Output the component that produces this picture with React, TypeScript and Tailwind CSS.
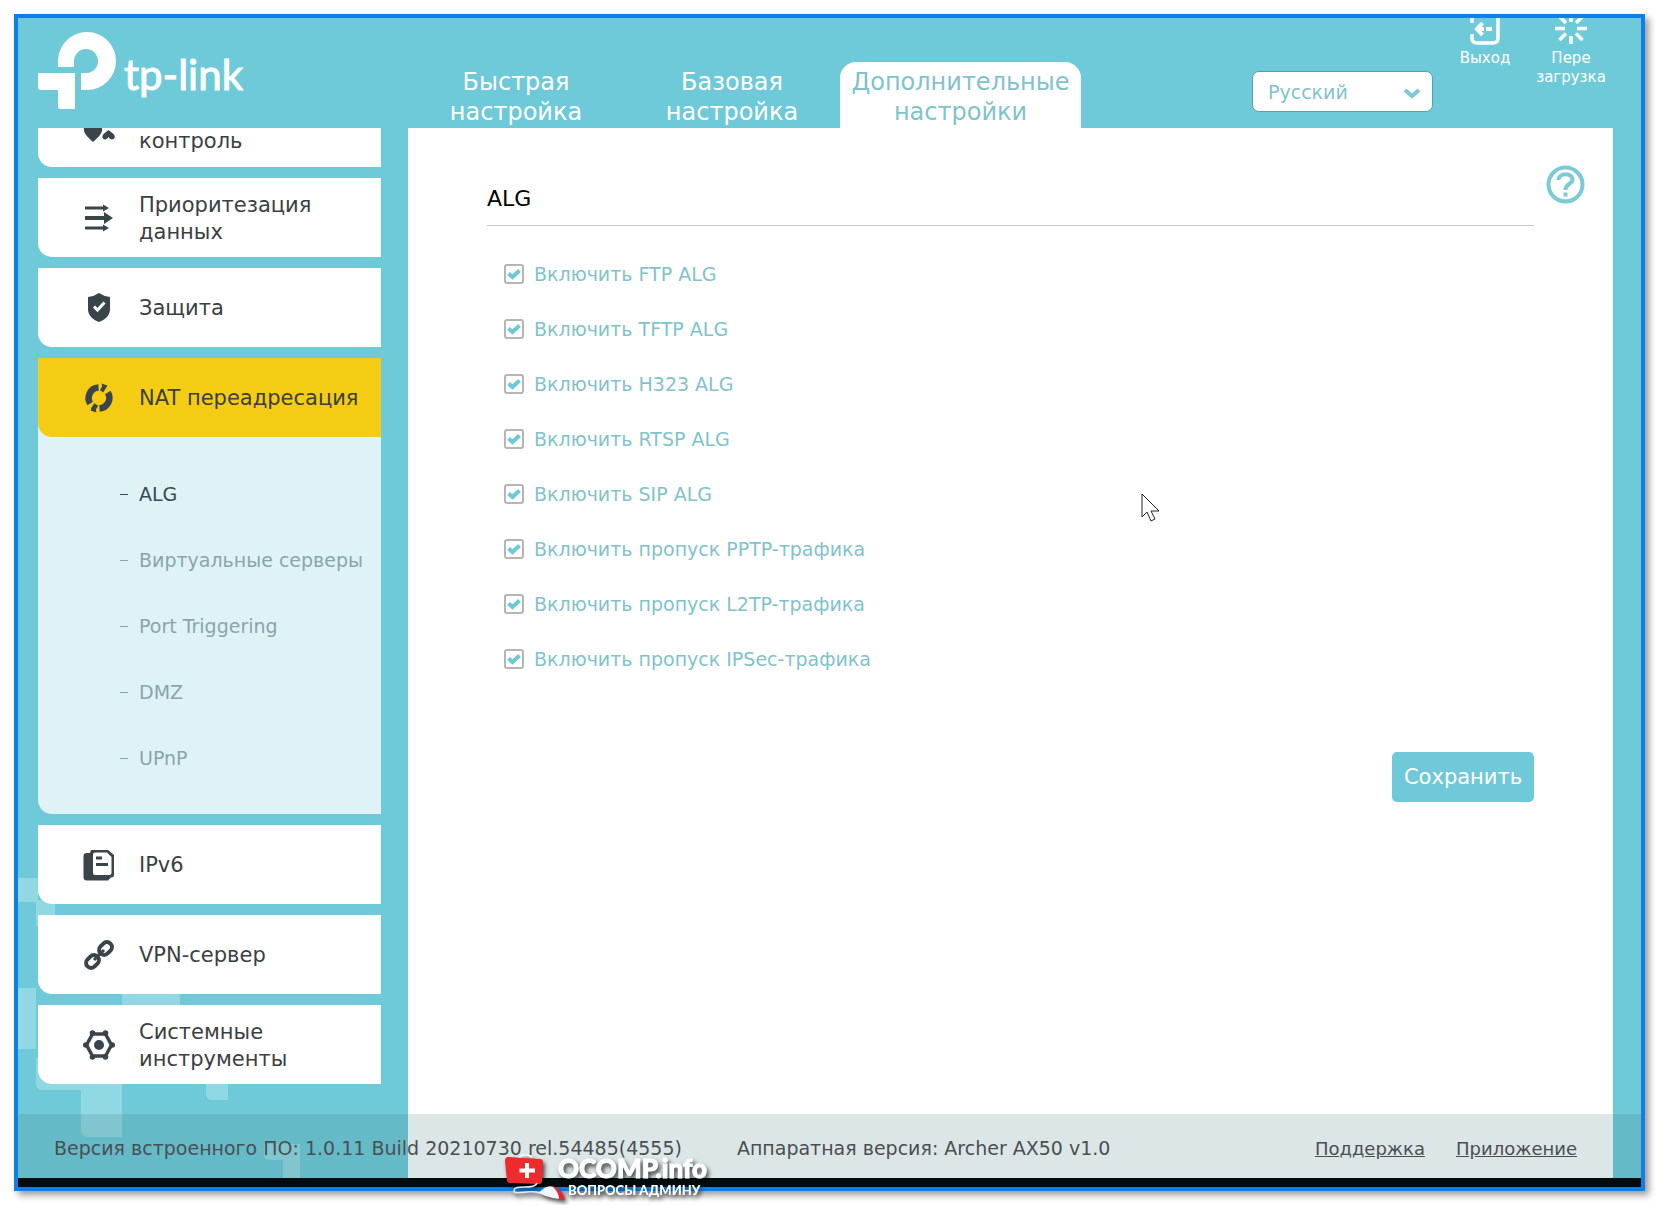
import React from 'react';
import type { ReactNode } from 'react';

const HeartsIcon = () => (
  <svg width="34" height="14" viewBox="0 0 34 14" fill="#3a444b">
    <path d="M1 0H19C20 4 17 8 10 14C3 8 0 4 1 0Z" />
    <path d="M25.500 2L30.500 6C33 8.500 31.500 11.500 29 11.500C27.500 11.500 26.500 10.500 25.500 9C24.500 10.500 23.500 11.500 22 11.500C19.500 11.500 18.500 8.500 20.500 6Z" />
  </svg>
);

const PriorityIcon = () => (
  <svg width="32" height="32" viewBox="0 0 32 32" fill="#3a444b">
    <path d="M2 4.500H20V2.500L26 6L20 9.500V7.500H2ZM2 14H21V10L30 16L21 22V18H2ZM2 24.500H20V22.500L26 26L20 29.500V27.500H2Z" />
  </svg>
);

const ShieldIcon = () => (
  <svg width="32" height="32" viewBox="0 0 32 32" fill="none">
    <path d="M16 1Q21 4.500 27 5V17C27 23 23 27.500 16 30C9 27.500 5 23 5 17V5Q11 4.500 16 1Z" fill="#3a444b" />
    <path d="M11 14.500L14.500 18L21.500 10.500" stroke="white" strokeWidth="3" />
  </svg>
);

const NatIcon = () => (
  <svg width="32" height="32" viewBox="0 0 32 32" fill="none">
    <path d="M15.500 5.500A10.500 10.500 0 0 0 7.200 21.500M9.500 24L13.500 26.500M16.500 26.500A10.500 10.500 0 0 0 24.800 10.500M18.500 5.500L22 7.500" stroke="#3a444b" strokeWidth="6.500" />
    <path d="M18.500 1.500L24.500 3.500L20.500 9ZM13.500 30.500L7.500 28.500L11.500 23Z" fill="#3a444b" />
  </svg>
);

const Ipv6Icon = () => (
  <svg width="32" height="32" viewBox="0 0 32 32" fill="none">
    <path d="M8 1H25L31 6V26Q31 28.500 28 28.500L25 31.500H4Q0.500 31.500 0.500 28V7Q0.500 4 4 4H7Z" fill="#3a444b" />
    <path d="M12 3.500H24L28.500 8V24Q28.500 26 26.500 26H12Q10 26 10 24V5.500Q10 3.500 12 3.500Z" fill="white" />
    <path d="M13 9H19M13 15.500H25" stroke="#3a444b" strokeWidth="3" />
  </svg>
);

const LinkIcon = () => (
  <svg width="32" height="32" viewBox="0 0 32 32" fill="none" stroke="#3a444b" strokeWidth="4">
    <rect x="-7" y="-5" width="14" height="10" rx="5" transform="translate(22.500 9.500) rotate(-45)" />
    <rect x="-7" y="-5" width="14" height="10" rx="5" transform="translate(9.500 22.500) rotate(-45)" />
    <path d="M11 21L21 11" strokeWidth="3" />
  </svg>
);

const GearIcon = () => (
  <svg width="32" height="32" viewBox="0 0 32 32" fill="none">
    <path d="M9.500 5H22.500L28.500 16L22.500 27H9.500L3.500 16Z" stroke="#3a444b" strokeWidth="3.500" strokeLinejoin="round" />
    <g fill="#3a444b">
      <circle cx="9.500" cy="4" r="2.800" />
      <circle cx="22.500" cy="4" r="2.800" />
      <circle cx="29.200" cy="16" r="2.800" />
      <circle cx="22.500" cy="28" r="2.800" />
      <circle cx="9.500" cy="28" r="2.800" />
      <circle cx="2.800" cy="16" r="2.800" />
      <circle cx="16" cy="16" r="5" />
    </g>
  </svg>
);

const Logo = () => (
  <svg width="78" height="78" viewBox="0 0 78 78" fill="white">
    <path d="M20 35V29A29 29 0 1 1 49 58H43V41H49A12 12 0 1 0 36 29V35Z" />
    <path d="M0 41H37V77H22Q20 77 20 74V58H3Q0 58 0 55Z" />
  </svg>
);

// pixel blocks behind the sidebar, anchored to the bottom left corner
const Pattern = () => (
  <svg className="absolute bottom-[9px] left-0" width="390" height="360" viewBox="0 0 390 360" fill="#90d8e2">
    <path d="M0 60H20V82H37V108H18V84H0ZM0 170H18V231H0ZM104 162H162V190H104Z" />
    <path d="M18 240H104V319H70Q63 319 63 312V272H24Q18 272 18 266ZM188 260H210V282H194Q188 282 188 276ZM246 326H282V360H265V342H252Q246 342 246 336Z" />
  </svg>
);

function MenuItem({ icon, label, active = false }: { icon: ReactNode; label: string; active?: boolean }) {
  return (
    <a
      href="#"
      className={`flex min-h-[79px] items-center rounded-bl-[14px] pl-[45px] text-[21px] leading-[27px] text-[#3a3f44] ${active ? 'bg-[#f5cc14]' : 'bg-white'}`}
    >
      <span className="w-14 shrink-0">{icon}</span>
      <span className="pt-0.5">{label}</span>
    </a>
  );
}

const subItems = ['ALG', 'Виртуальные серверы', 'Port Triggering', 'DMZ', 'UPnP'];

const options = [
  'Включить FTP ALG',
  'Включить TFTP ALG',
  'Включить H323 ALG',
  'Включить RTSP ALG',
  'Включить SIP ALG',
  'Включить пропуск PPTP-трафика',
  'Включить пропуск L2TP-трафика',
  'Включить пропуск IPSec-трафика',
];

function Header() {
  return (
    <header className="relative flex h-[110px] shrink-0 pl-5">
      <div className="flex w-[370px] shrink-0 gap-2 pt-3.5">
        <Logo />
        <span className="pt-[18px] font-[Lato] text-[42px] leading-[48px] text-white [-webkit-text-stroke:1px_white]">tp-link</span>
      </div>
      <nav className="flex items-end text-center text-[24px] leading-[30px] text-white">
        <a href="#" className="w-[216px] px-8 pb-px">Быстрая настройка</a>
        <a href="#" className="w-[216px] px-8 pb-px">Базовая настройка</a>
        <a href="#" className="w-[241px] rounded-t-[16px] bg-white pt-[5px] pb-px text-[#7fc3cd]">
          Дополнительные настройки
        </a>
      </nav>
      <div className="ml-auto flex pr-5">
        <div className="relative mt-[53px] mr-4 h-[41px] w-[181px]">
          <select
            aria-label="Язык"
            className="h-full w-full appearance-none rounded-[7px] border border-[#4fa3b1] bg-white pt-px pl-[15px] text-[19px] text-[#7fc3cd]"
          >
            <option>Русский</option>
          </select>
          <svg className="pointer-events-none absolute top-[17px] right-3" width="18" height="11" viewBox="0 0 18 11" fill="none">
            <path d="M2 2L9 8L16 2" stroke="#7bcad6" strokeWidth="4" />
          </svg>
        </div>
        <button className="flex w-[72px] flex-col items-center text-[15px] leading-[19px] text-white">
          <svg width="32" height="31" viewBox="0 0 32 31" fill="none" stroke="white" strokeWidth="3.500">
            <path d="M3 5V0M3 16V20Q3 25 8 25H24Q29 25 29 20V0" />
            <path d="M13.500 5L8 11L13.500 17M8 11H15M17 11H23" strokeWidth="4" />
          </svg>
          Выход
        </button>
        <button className="flex w-[100px] flex-col items-center text-[15px] leading-[19px] text-white">
          <svg width="32" height="31" viewBox="0 0 32 31" fill="none" stroke="white" strokeWidth="3.500">
            <path d="M16 0V4M16 18V26M0 10.500H10M22 10.500H32M4.500 22L11 15.500M21 15.500L27.500 22M4 -2L11 5M21 5L28 -2" />
          </svg>
          <span>Пере<br />загрузка</span>
        </button>
      </div>
    </header>
  );
}

function Sidebar() {
  return (
    <aside className="relative flex w-[343px] shrink-0 flex-col gap-[11px]">
      {/* tail of the card scrolled under the header */}
      <a href="#" className="flex h-[39px] items-start rounded-bl-[14px] bg-white pl-[45px] text-[21px] leading-[27px] text-[#3a3f44]">
        <span className="w-14 shrink-0"><HeartsIcon /></span>
        <span>контроль</span>
      </a>
      <MenuItem icon={<PriorityIcon />} label="Приоритезация данных" />
      <MenuItem icon={<ShieldIcon />} label="Защита" />
      <div className="rounded-bl-[14px] bg-[#dff3f6]">
        <MenuItem icon={<NatIcon />} label="NAT переадресация" active />
        <ul className="pt-6 pb-[23px] text-[19px]">
          {subItems.map((item, i) => (
            <li key={item}>
              <a
                href="#"
                className={`flex h-[66px] items-center pl-[82px] whitespace-nowrap ${i === 0 ? 'text-[#3a4a52]' : 'text-[#8aa5ab]'}`}
              >
                <span className="mr-[11px] h-px w-2 bg-current" />
                {item}
              </a>
            </li>
          ))}
        </ul>
      </div>
      <MenuItem icon={<Ipv6Icon />} label="IPv6" />
      <MenuItem icon={<LinkIcon />} label="VPN-сервер" />
      <MenuItem icon={<GearIcon />} label="Системные инструменты" />
    </aside>
  );
}

function Content() {
  return (
    <main className="relative ml-[27px] flex-1 bg-white pt-[51px] pr-[79px] pl-[79px]">
      <h1 className="h-[47px] border-b border-[#c4c8c8] text-[22px] leading-10 text-black">ALG</h1>
      <button aria-label="Помощь" className="absolute top-9 right-7">
        <svg width="40" height="40" viewBox="0 0 40 40" fill="none" stroke="#7bcad6" strokeWidth="4">
          <circle cx="20.500" cy="20.500" r="17" />
          <path d="M13.500 16C13.500 8.500 27.500 8.500 27.500 15.500C27.500 20 20.500 19.500 20.500 26" />
          <path d="M20.500 28.500V32.500" />
        </svg>
      </button>
      <form>
        <div className="pt-5 pl-[17px] text-[19px] text-[#7fc3cd]">
          {options.map((option) => (
            <label key={option} className="flex h-[55px] items-center gap-2.5">
              <span className="relative h-5 w-5">
                <input type="checkbox" defaultChecked className="peer block h-5 w-5 appearance-none rounded-[3px] border-2 border-[#b8b4b4] bg-white" />
                <svg className="pointer-events-none absolute top-0 left-0 hidden peer-checked:block" width="20" height="20" viewBox="0 0 20 20" fill="none">
                  <path d="M4.500 9.500L8.500 13L15.500 6.500" stroke="#6dc9d8" strokeWidth="4" />
                </svg>
              </span>
              <span className="pt-0.5">{option}</span>
            </label>
          ))}
        </div>
        <div className="mt-[66px] flex justify-end">
          <button type="button" className="h-[50px] min-w-[142px] rounded-[5px] bg-[#6fc9d8] pt-0.5 text-[21px] text-white">Сохранить</button>
        </div>
      </form>
      <svg className="absolute top-[365px] left-[733px]" width="20" height="30" viewBox="0 0 20 30" fill="white" stroke="#222" strokeWidth="1">
        <path d="M1 1V24L6 19L10 28L14 26L10 18H18Z" />
      </svg>
    </main>
  );
}

function Watermark() {
  return (
    <div className="absolute bottom-[-14px] left-[486px] flex font-[Lato] font-black text-white drop-shadow-[2px_3px_2px_rgba(0,0,0,0.7)]">
      <svg width="62" height="48" viewBox="0 0 62 48" fill="none">
        <path d="M15 5Q20 -1 28 4" stroke="white" strokeWidth="1.500" />
        <path d="M4 4L36 6Q39 6 39 9L38 28Q38 31 35 31L6 30Q3 30 3 27L1 8Q1 4 4 4Z" fill="#ee2a2c" />
        <path d="M23 10V25M15.500 17.500H31" stroke="white" strokeWidth="4" />
        <path d="M33 30C30 38 10 30 10 38C10 43 24 36 36 40" stroke="#dcebf5" strokeWidth="1.500" />
        <path d="M35 40Q42 31 50 34Q58 37 60 46Q46 46 35 40Z" fill="#f3f6fa" />
        <path d="M48 33Q58 35 61 47L55 46Q55 39 48 33Z" fill="#e3262b" />
      </svg>
      <div className="-ml-2 pt-px">
        <div className="text-[26px] leading-[28px] [-webkit-text-stroke:1px_white]">OCOMP.info</div>
        <div className="pl-2.5 text-[13px] leading-[16px]">ВОПРОСЫ АДМИНУ</div>
      </div>
    </div>
  );
}

export default function App() {
  return (
    <div className="flex min-h-screen bg-white p-3.5 font-['DejaVu_Sans',sans-serif]">
      <div className="relative flex flex-1 flex-col border-4 border-[#0f7fe8] bg-[#6ecad9] shadow-[4px_4px_7px_rgba(0,0,0,0.4)]">
        <Pattern />
        <Header />
        <div className="flex flex-1 pr-7 pl-5">
          <Sidebar />
          <Content />
        </div>
        <footer className="relative -mt-16 flex h-16 items-center bg-[#3c7378]/18 pt-1 pr-16 pl-9 text-[19px] text-[#4a4f52]">
          <span>Версия встроенного ПО: 1.0.11 Build 20210730 rel.54485(4555)</span>
          <span className="ml-[55px]">Аппаратная версия: Archer AX50 v1.0</span>
          <a href="#" className="ml-auto text-[18px] underline">Поддержка</a>
          <a href="#" className="ml-[31px] text-[18px] underline">Приложение</a>
        </footer>
        <div className="h-[9px] bg-[#020c0f]" />
        <Watermark />
      </div>
    </div>
  );
}
